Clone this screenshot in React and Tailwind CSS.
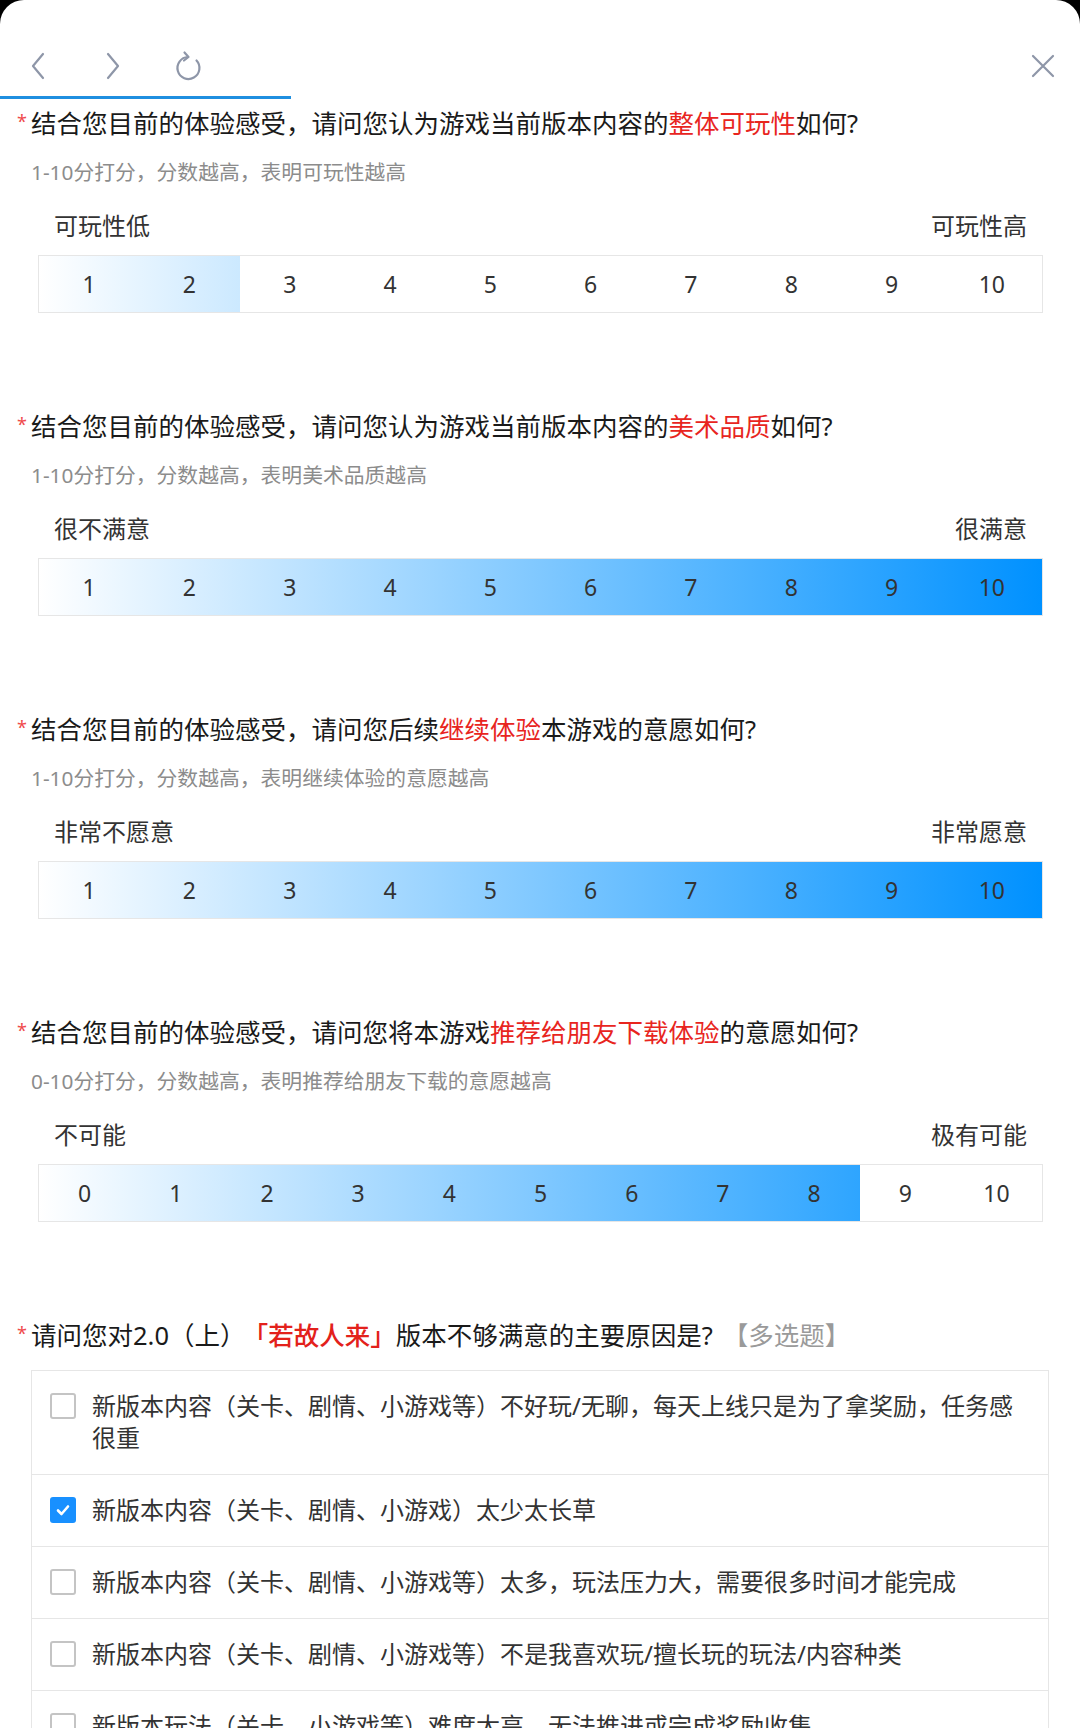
import React from "react";

const questions = [
  {
    pre: "结合您目前的体验感受，请问您认为游戏当前版本内容的",
    hl: "整体可玩性",
    post: "如何?",
    hint: "1-10分打分，分数越高，表明可玩性越高",
    low: "可玩性低",
    high: "可玩性高",
    min: 1,
    value: 2,
  },
  {
    pre: "结合您目前的体验感受，请问您认为游戏当前版本内容的",
    hl: "美术品质",
    post: "如何?",
    hint: "1-10分打分，分数越高，表明美术品质越高",
    low: "很不满意",
    high: "很满意",
    min: 1,
    value: 10,
  },
  {
    pre: "结合您目前的体验感受，请问您后续",
    hl: "继续体验",
    post: "本游戏的意愿如何?",
    hint: "1-10分打分，分数越高，表明继续体验的意愿越高",
    low: "非常不愿意",
    high: "非常愿意",
    min: 1,
    value: 10,
  },
  {
    pre: "结合您目前的体验感受，请问您将本游戏",
    hl: "推荐给朋友下载体验",
    post: "的意愿如何?",
    hint: "0-10分打分，分数越高，表明推荐给朋友下载的意愿越高",
    low: "不可能",
    high: "极有可能",
    min: 0,
    value: 8,
  },
];

const options = [
  { text: "新版本内容（关卡、剧情、小游戏等）不好玩/无聊，每天上线只是为了拿奖励，任务感很重", checked: false },
  { text: "新版本内容（关卡、剧情、小游戏）太少太长草", checked: true },
  { text: "新版本内容（关卡、剧情、小游戏等）太多，玩法压力大，需要很多时间才能完成", checked: false },
  { text: "新版本内容（关卡、剧情、小游戏等）不是我喜欢玩/擅长玩的玩法/内容种类", checked: false },
  { text: "新版本玩法（关卡、小游戏等）难度太高，无法推进或完成奖励收集", checked: false },
];

const Header = () => (
  <div>
    <div className="relative flex h-[96px] items-center pt-[36px]">
      <div className="flex w-[76px] justify-center">
        <svg width="16" height="28" viewBox="0 0 16 28" fill="none" stroke="#8e96a8" strokeWidth="2.2" strokeLinecap="round" strokeLinejoin="round">
          <path d="M13 2 L3 14 L13 26" />
        </svg>
      </div>
      <div className="flex w-[74px] justify-center">
        <svg width="16" height="28" viewBox="0 0 16 28" fill="none" stroke="#8e96a8" strokeWidth="2.2" strokeLinecap="round" strokeLinejoin="round">
          <path d="M3 2 L13 14 L3 26" />
        </svg>
      </div>
      <div className="flex w-[76px] justify-center">
        <svg width="30" height="32" viewBox="0 0 30 32" fill="none" stroke="#8e96a8" strokeWidth="2.2" strokeLinecap="round" strokeLinejoin="round">
          <path d="M15 7 A11 11 0 1 0 23.5 10.5" />
          <path d="M11.5 2.5 L15.5 7 L11 10.5" />
        </svg>
      </div>
      <div className="ml-auto mr-[19px] flex w-[36px] justify-center">
        <svg width="26" height="26" viewBox="0 0 26 26" fill="none" stroke="#8e96a8" strokeWidth="2.2" strokeLinecap="round">
          <path d="M3 3 L23 23 M23 3 L3 23" />
        </svg>
      </div>
    </div>
    <div className="h-[3px] w-[291px] bg-[#1f8fe0]" />
  </div>
);

const Title = ({ children }) => (
  <div className="flex text-[25.5px] leading-[32px] text-[#1a1a1a]">
    <span className="w-[15px] shrink-0 pl-[1px] pt-[2px] text-[18px] leading-[24px] text-[#ef4b4b]">*</span>
    <div>{children}</div>
  </div>
);

const RatingQuestion = ({ q }) => {
  const nums = [];
  for (let n = q.min; n <= 10; n++) nums.push(n);
  return (
    <div className="mb-[97px]">
      <Title>
        {q.pre}
        <span className="text-[#e8251e]">{q.hl}</span>
        {q.post}
      </Title>
      <div className="ml-[15px] mt-[19px] text-[20.8px] leading-[28px] text-[#8c8c8c]">{q.hint}</div>
      <div className="ml-[38px] mr-[22px] mt-[25px] flex justify-between text-[24px] leading-[30px] text-[#333333]">
        <span>{q.low}</span>
        <span>{q.high}</span>
      </div>
      <div className="ml-[22px] mr-[6px] mt-[14px] flex h-[58px] border border-[#e6e6e6] bg-[linear-gradient(90deg,#ffffff,#0091ff)]">
        {nums.map((n) => (
          <div
            key={n}
            className={
              "flex flex-1 items-center justify-center text-[23px] text-[#333333] " +
              (n > q.value ? "bg-white" : "")
            }
          >
            {n}
          </div>
        ))}
      </div>
    </div>
  );
};

const Checkbox = ({ checked }) =>
  checked ? (
    <div className="mt-[3px] flex h-[26px] w-[26px] shrink-0 items-center justify-center rounded-[3px] bg-[#1890ff]">
      <svg width="16" height="16" viewBox="0 0 16 16" fill="none" stroke="#ffffff" strokeWidth="2.6" strokeLinecap="round" strokeLinejoin="round">
        <path d="M3 8.5 L6.5 12 L13 4.5" />
      </svg>
    </div>
  ) : (
    <div className="mt-[3px] h-[26px] w-[26px] shrink-0 rounded-[3px] border-2 border-[#c4c4c4] bg-white" />
  );

export default function App() {
  return (
    <div className="h-[1728px] w-full overflow-hidden bg-black font-['Noto_Sans','Noto_Sans_CJK_SC',sans-serif]">
      <div className="h-full rounded-t-[24px] bg-white">
        <Header />
        <div className="pl-[16px] pr-[31px] pt-[8px]">
          {questions.map((q, i) => (
            <RatingQuestion key={i} q={q} />
          ))}

          <Title>
            请问您对2.0（上）
            <span className="ml-[10px] font-medium text-[#e3211b]">「若故人来」</span>
            版本不够满意的主要原因是?
            <span className="ml-[10px] text-[#9a9a9a]">【多选题】</span>
          </Title>
          <div className="ml-[15px] mt-[19px] border border-[#e6e6e6]">
            {options.map((o, i) => (
              <div
                key={i}
                className={
                  "flex gap-[16px] pb-[20px] pl-[18px] pr-[24px] pt-[19px] " +
                  (i > 0 ? "border-t border-[#e6e6e6]" : "")
                }
              >
                <Checkbox checked={o.checked} />
                <div className="text-[24px] leading-[32px] text-[#333333]">{o.text}</div>
              </div>
            ))}
          </div>
        </div>
      </div>
    </div>
  );
}
